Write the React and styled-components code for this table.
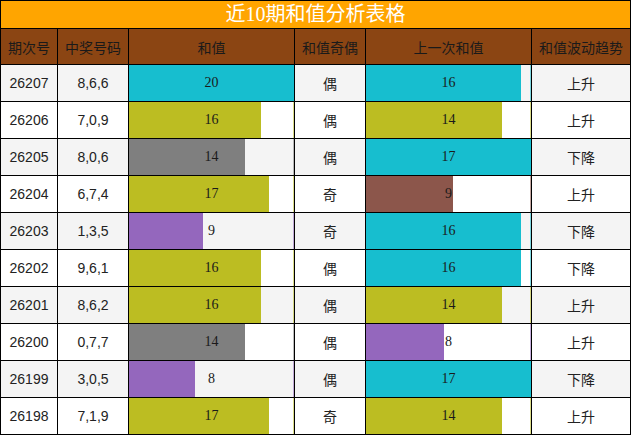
import React from "react";
import styled, { createGlobalStyle } from "styled-components";

const GlobalStyle = createGlobalStyle`
    html, body {
        margin: 0;
        padding: 0;
        background: #ffffff;
    }
    body {
        font-family: "Noto Sans CJK SC", "Noto Sans", sans-serif;
    }
`;

const COLORS = {
    cyan: "#17becf",
    olive: "#bcbd22",
    gray: "#7f7f7f",
    purple: "#9467bd",
    brown: "#8c564b",
};

const rows = [
    [26207, "8,6,6", 20, "cyan", "偶", 16, "cyan", "上升"],
    [26206, "7,0,9", 16, "olive", "偶", 14, "olive", "上升"],
    [26205, "8,0,6", 14, "gray", "偶", 17, "cyan", "下降"],
    [26204, "6,7,4", 17, "olive", "奇", 9, "brown", "上升"],
    [26203, "1,3,5", 9, "purple", "奇", 16, "cyan", "下降"],
    [26202, "9,6,1", 16, "olive", "偶", 16, "cyan", "下降"],
    [26201, "8,6,2", 16, "olive", "偶", 14, "olive", "上升"],
    [26200, "0,7,7", 14, "gray", "偶", 8, "purple", "上升"],
    [26199, "3,0,5", 8, "purple", "偶", 17, "cyan", "下降"],
    [26198, "7,1,9", 17, "olive", "奇", 14, "olive", "上升"],
];

const headers = ["期次号", "中奖号码", "和值", "和值奇偶", "上一次和值", "和值波动趋势"];

const Table = styled.div`
    width: 631px;
    height: 435px;
    box-sizing: border-box;
    display: grid;
    grid-template-columns: 56px 70px 165px 70px 165px 98px;
    grid-template-rows: 27px 35px repeat(10, 36px);
    gap: 1px;
    padding: 1px;
    background: #000000;
`;

const Title = styled.div`
    grid-column: 1 / -1;
    background: #ffa500;
    color: #ffffff;
    font-family: "Liberation Serif", "Noto Sans CJK SC", serif;
    font-size: 20px;
    line-height: 27px;
    text-align: center;
    overflow: hidden;
`;

const HeadCell = styled.div`
    background: #8b4513;
    color: #1a1a1a;
    font-size: 14px;
    display: flex;
    align-items: center;
    justify-content: center;
    white-space: nowrap;
`;

const Cell = styled.div`
    background: ${(p) => (p.$striped ? "#f4f4f4" : "#ffffff")};
    color: #222222;
    font-size: 14px;
    display: flex;
    align-items: center;
    justify-content: center;
    white-space: nowrap;
`;

const NumCell = styled(Cell)`
    font-family: "Liberation Sans", "Noto Sans CJK SC", sans-serif;
`;

const BarCell = styled(Cell)`
    font-family: "Liberation Serif", serif;
    color: #1a1a1a;
    box-shadow: inset -1px 0 0 ${(p) => p.$color}88;
`;

function Bar({ value, max, color, striped }) {
    const pct = (value / max) * 100;
    const c = COLORS[color];
    const base = striped ? "#f4f4f4" : "#ffffff";
    return (
        <BarCell
            $striped={striped}
            $color={c}
            style={{ background: `linear-gradient(to right, ${c} ${pct}%, ${base} ${pct}%)` }}
        >
            {value}
        </BarCell>
    );
}

export default function App() {
    return (
        <>
            <GlobalStyle />
            <Table>
                <Title>近10期和值分析表格</Title>
                {headers.map((h) => (
                    <HeadCell key={h}>{h}</HeadCell>
                ))}
                {rows.map((r, i) => {
                    const striped = i % 2 === 0;
                    return (
                        <React.Fragment key={r[0]}>
                            <NumCell $striped={striped}>{r[0]}</NumCell>
                            <NumCell $striped={striped}>{r[1]}</NumCell>
                            <Bar value={r[2]} max={20} color={r[3]} striped={striped} />
                            <Cell $striped={striped}>{r[4]}</Cell>
                            <Bar value={r[5]} max={17} color={r[6]} striped={striped} />
                            <Cell $striped={striped}>{r[7]}</Cell>
                        </React.Fragment>
                    );
                })}
            </Table>
        </>
    );
}
